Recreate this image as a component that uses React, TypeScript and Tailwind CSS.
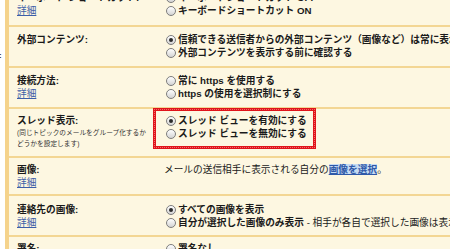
import React from 'react';

const font = { fontFamily: '"Liberation Sans", "Noto Sans CJK JP", sans-serif' };

function Radio({ checked }: { checked?: boolean }) {
    return (
        <span className="ml-[2px] mr-[2px] flex h-[10px] w-[10px] shrink-0 items-center justify-center rounded-full border border-[#7d7d7d] bg-gradient-to-b from-[#ffffff] to-[#d4d4d4]">
            {checked && <span className="h-[4px] w-[4px] rounded-full bg-[#2b2b2b]" />}
        </span>
    );
}

function Option({ checked, children }: { checked?: boolean; children: React.ReactNode }) {
    return (
        <div className="flex h-[13px] items-center whitespace-nowrap font-bold">
            <Radio checked={checked} />
            <span>{children}</span>
        </div>
    );
}

function Detail() {
    return <a className="block h-[13px] text-[#3d5fa8] underline">詳細</a>;
}

interface RowProps {
    label: string;
    detail?: boolean;
    note?: string[];
    className: string;
    children: React.ReactNode;
}

function Row({ label, detail, note, className, children }: RowProps) {
    return (
        <div className={`relative flex border-b-2 border-[#f3d693] ${className}`}>
            <div className="w-[155px] shrink-0 pl-[8px]">
                <div className="h-[13px] whitespace-nowrap font-bold">{label}</div>
                {detail && <Detail />}
                {note && (
                    <div className="text-[6.7px] leading-[11px] text-[#333]">
                        {note.map((n) => (
                            <div key={n} className="whitespace-nowrap">{n}</div>
                        ))}
                    </div>
                )}
            </div>
            <div className="min-w-0 flex-1 overflow-hidden">{children}</div>
        </div>
    );
}

export default function App() {
    return (
        <div
            className="flex h-[249px] w-[450px] overflow-hidden bg-white text-[9.7px] leading-[13px] text-[#1a1a1a]"
            style={font}
        >
            <div className="w-[5px] shrink-0 pt-[52px] text-[8px] font-bold leading-[8px] text-[#333]">
                <span className="-ml-[1px]">:</span>
            </div>
            <div className="w-[4px] shrink-0 bg-[#f5d38c]" />
            <div className="min-w-0 flex-1 bg-[#fdf7e1]">
                <Row label="キーボード ショートカット:" detail className="-mt-[16px] pt-[7px] pb-[8px]">
                    <Option>キーボードショートカット OFF</Option>
                    <Option>キーボードショートカット ON</Option>
                </Row>
                <Row label="外部コンテンツ:" className="pt-[6px] pb-[7px]">
                    <Option checked>信頼できる送信者からの外部コンテンツ（画像など）は常に表示する</Option>
                    <Option>外部コンテンツを表示する前に確認する</Option>
                </Row>
                <Row label="接続方法:" detail className="pt-[6px] pb-[7px]">
                    <Option>常に https を使用する</Option>
                    <Option>https の使用を選択制にする</Option>
                </Row>
                <Row
                    label="スレッド表示:"
                    note={['(同じトピックのメールをグループ化するか', 'どうかを設定します)']}
                    className="pt-[5px] pb-[7px]"
                >
                    <Option checked>スレッド ビューを有効にする</Option>
                    <Option>スレッド ビューを無効にする</Option>
                    <div className="absolute left-[144px] top-[-1px] h-[41px] w-[163px] border-[3px] border-solid border-[#e0141b] outline outline-1 outline-dotted outline-offset-[-2px] outline-[#f26a6a]" />
                </Row>
                <Row label="画像:" detail className="pt-[5px] pb-[5px]">
                    <div className="whitespace-nowrap">
                        メールの送信相手に表示される自分の
                        <a className="bg-[#c6dbf3] font-bold text-[#2f59a8] underline">画像を選択</a>。
                    </div>
                </Row>
                <Row label="連絡先の画像:" detail className="pt-[7px] pb-[6px]">
                    <Option checked>すべての画像を表示</Option>
                    <Option>
                        自分が選択した画像のみ表示
                        <span className="font-normal"> - 相手が各自で選択した画像は表示しない</span>
                    </Option>
                </Row>
                <Row label="署名:" className="pt-[5px] pb-[6px]">
                    <Option>署名なし</Option>
                    <Option>署名を付ける</Option>
                </Row>
            </div>
        </div>
    );
}
